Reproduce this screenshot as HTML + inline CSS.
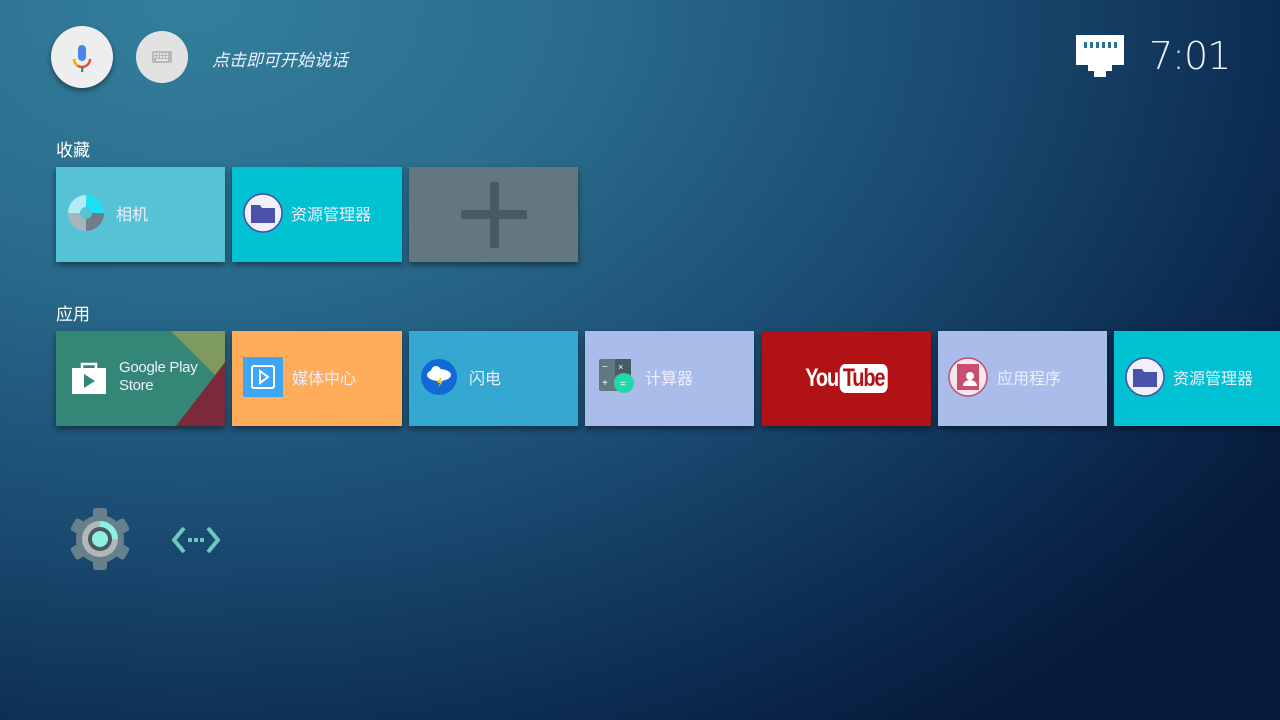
<!DOCTYPE html>
<html><head><meta charset="utf-8"><style>
*{margin:0;padding:0;box-sizing:border-box}
body{width:1280px;height:720px;overflow:hidden;font-family:"Liberation Sans","Noto Sans CJK SC",sans-serif;
background:radial-gradient(ellipse 1300px 900px at 15% 0%,#337f9c 0%,#2a6c8c 30%,#1a4a70 60%,#0c2a50 85%,#071a3a 100%);position:relative}
.t{position:absolute;width:169px;height:95px;box-shadow:0 3px 6px rgba(0,0,0,.45);display:flex;align-items:center;color:#eef;font-size:16px;padding-bottom:3px}
.t svg{flex:none}
.lbl{position:absolute;color:#fff;font-size:17px}
</style></head><body>
<div style="position:absolute;left:51px;top:26px;width:62px;height:62px;border-radius:50%;background:#eee;box-shadow:0 3px 6px rgba(0,0,0,.4)">
<svg width="62" height="62" viewBox="0 0 62 62"><rect x="27" y="19" width="8" height="16" rx="4" fill="#4a86e8"/><path d="M23 33a8 8 0 0 0 16 0" stroke="#e04a3a" stroke-width="2.4" fill="none"/><path d="M23 33a8 8 0 0 0 4 6.5" stroke="#f5b400" stroke-width="2.4" fill="none"/><rect x="30" y="41" width="2.4" height="5" fill="#1aa260"/></svg></div>
<div style="position:absolute;left:136px;top:31px;width:52px;height:52px;border-radius:50%;background:#e2e2e2">
<svg width="52" height="52"><rect x="16" y="20" width="20" height="12" rx="1.5" fill="#b8b8b8"/><g fill="#e2e2e2"><rect x="18" y="22" width="2" height="2"/><rect x="21" y="22" width="2" height="2"/><rect x="24" y="22" width="2" height="2"/><rect x="27" y="22" width="2" height="2"/><rect x="30" y="22" width="2" height="2"/><rect x="18" y="25" width="2" height="2"/><rect x="21" y="25" width="2" height="2"/><rect x="24" y="25" width="2" height="2"/><rect x="27" y="25" width="2" height="2"/><rect x="30" y="25" width="2" height="2"/><rect x="20" y="28" width="12" height="2"/></g></svg></div>
<div style="position:absolute;left:212px;top:46px;color:#eef;font-size:17px;font-style:italic">点击即可开始说话</div>
<svg style="position:absolute;left:1076px;top:35px" width="48" height="44" viewBox="0 0 48 44"><path d="M0 0h48v30h-12v6h-6v6h-12v-6h-6v-6H0z" fill="#fff"/><g fill="#2b7190"><rect x="8" y="7" width="3" height="6"/><rect x="14" y="7" width="3" height="6"/><rect x="20" y="7" width="3" height="6"/><rect x="26" y="7" width="3" height="6"/><rect x="32" y="7" width="3" height="6"/><rect x="38" y="7" width="3" height="6"/></g></svg>
<div style="position:absolute;left:1149px;top:34px;color:#eef2f6;font-size:38px;font-family:'DejaVu Sans','Liberation Sans',sans-serif;font-weight:200;letter-spacing:-1px">7:01</div>
<div class="lbl" style="left:56px;top:136px">收藏</div>
<div class="lbl" style="left:56px;top:300px">应用</div>
<div class="t" style="left:56px;top:167px;background:#56c2d6"><svg style="margin-left:12px" width="36" height="36" viewBox="0 0 36 36"><circle cx="18" cy="18" r="18" fill="#9aa8b0"/><path d="M18 0A18 18 0 0 1 36 18H18z" fill="#1de0f6"/><path d="M0 18A18 18 0 0 1 18 0v18z" fill="#b2ecf4"/><path d="M18 36A18 18 0 0 1 0 18h18z" fill="#a6b4bc"/><path d="M36 18a18 18 0 0 1-18 18V18z" fill="#6e7e88"/><circle cx="18" cy="18" r="6" fill="#56c2d6"/></svg><span style="margin-left:12px">相机</span></div>
<div class="t" style="left:232px;top:167px;background:#00c2d2;width:170px"><svg style="margin-left:11px" width="40" height="40" viewBox="0 0 40 40"><circle cx="20" cy="20" r="19" fill="#f0f0f8" stroke="#4a4aa8" stroke-width="1.5"/><path d="M8 12h9l2 3h13v15H8z" fill="#4a52a8"/></svg><span style="margin-left:8px">资源管理器</span></div>
<div class="t" style="left:409px;top:167px;background:#63777f;justify-content:center;padding:0"><svg width="66" height="66"><rect x="29" y="0" width="9" height="66" rx="2" fill="#475a64"/><rect x="0" y="28" width="66" height="9" rx="2" fill="#475a64"/></svg></div>
<div class="t" style="left:56px;top:331px;background:#348677;overflow:hidden"><svg style="position:absolute;left:0;top:0" width="170" height="95"><polygon points="115,0 170,0 170,55" fill="#7f9a5e"/><polygon points="170,30 170,95 120,95" fill="#7c2a3a"/></svg><svg style="position:relative;margin-left:16px" width="34" height="34" viewBox="0 0 34 34"><path d="M10 8V4h14v4" stroke="#fff" stroke-width="2.5" fill="none"/><rect x="0" y="8" width="34" height="26" fill="#fff"/><path d="M12 14l11 7-11 7z" fill="#348677"/></svg><span style="position:relative;margin-left:13px;font-size:15px;line-height:18px;letter-spacing:-.3px">Google Play<br>Store</span></div>
<div class="t" style="left:232px;top:331px;background:#ffad5a;width:170px"><svg style="margin-left:11px" width="40" height="40"><rect width="40" height="40" fill="#3ea6f5"/><rect x="9" y="9" width="22" height="22" rx="2" fill="none" stroke="#fff" stroke-width="2"/><path d="M17 14l8 6-8 6z" fill="none" stroke="#fff" stroke-width="2"/></svg><span style="margin-left:9px">媒体中心</span></div>
<div class="t" style="left:409px;top:331px;background:#34a8d0"><svg style="margin-left:11px" width="38" height="38"><circle cx="19" cy="19" r="18" fill="#1268d8"/><ellipse cx="19" cy="17" rx="12" ry="6" fill="#fff"/><circle cx="16" cy="13" r="5" fill="#fff"/><path d="M20 20l-3 5h3l-2 5 5-7h-3l2-3z" fill="#f4c400"/></svg><span style="margin-left:11px">闪电</span></div>
<div class="t" style="left:585px;top:331px;background:#aabdea"><svg style="margin-left:14px" width="36" height="36"><rect width="32" height="32" rx="2" fill="#607880"/><rect x="16" width="16" height="16" fill="#4a5a62"/><text x="3" y="11" fill="#fff" font-size="10">−</text><text x="19" y="11" fill="#fff" font-size="9">×</text><text x="3" y="27" fill="#fff" font-size="10">+</text><circle cx="25" cy="24" r="10" fill="#22d8a8"/><text x="21" y="28" fill="#fff" font-size="10">=</text></svg><span style="margin-left:10px">计算器</span></div>
<div class="t" style="left:762px;top:331px;background:#b01216;justify-content:center;padding:0"><span style="font-family:'Liberation Sans Narrow','Liberation Sans',sans-serif;font-weight:bold;font-size:25px;color:#fff;letter-spacing:-1.5px;transform:scaleX(.8);display:flex;align-items:center">You<span style="background:#fff;color:#b01216;border-radius:7px;padding:0 4px;margin-left:2px">Tube</span></span></div>
<div class="t" style="left:938px;top:331px;background:#aabdea"><svg style="margin-left:10px" width="40" height="40"><circle cx="20" cy="20" r="19" fill="#f4e8ee" stroke="#c05070" stroke-width="1.5"/><rect x="9" y="7" width="22" height="26" fill="#c8506e"/><circle cx="22" cy="19" r="4" fill="#fff"/><path d="M15 29a7 6 0 0 1 14 0z" fill="#fff"/></svg><span style="margin-left:9px">应用程序</span></div>
<div class="t" style="left:1114px;top:331px;background:#00c2d2;width:170px"><svg style="margin-left:11px" width="40" height="40" viewBox="0 0 40 40"><circle cx="20" cy="20" r="19" fill="#f0f0f8" stroke="#4a4aa8" stroke-width="1.5"/><path d="M8 12h9l2 3h13v15H8z" fill="#4a52a8"/></svg><span style="margin-left:8px">资源管理器</span></div>
<svg style="position:absolute;left:68px;top:508px" width="64" height="62" viewBox="0 0 64 62"><g fill="#66808c" transform="translate(32 31)"><circle r="24"/><rect x="-7" y="-31" width="14" height="62" rx="3"/><rect x="-7" y="-31" width="14" height="62" rx="3" transform="rotate(60)"/><rect x="-7" y="-31" width="14" height="62" rx="3" transform="rotate(-60)"/></g><circle cx="32" cy="31" r="18" fill="#b0b8bc"/><path d="M32 13a18 18 0 0 1 18 18H32z" fill="#8ff0e0"/><circle cx="32" cy="31" r="12" fill="#4a5a60"/><circle cx="32" cy="31" r="8" fill="#8ff0e0"/></svg>
<svg style="position:absolute;left:172px;top:526px" width="48" height="28"><path d="M12 2L2 14l10 12M36 2l10 12-10 12" stroke="#6ec8bc" stroke-width="4" fill="none"/><rect x="16" y="12" width="4" height="4" fill="#6ec8bc"/><rect x="22" y="12" width="4" height="4" fill="#6ec8bc"/><rect x="28" y="12" width="4" height="4" fill="#6ec8bc"/></svg>
</body></html>
